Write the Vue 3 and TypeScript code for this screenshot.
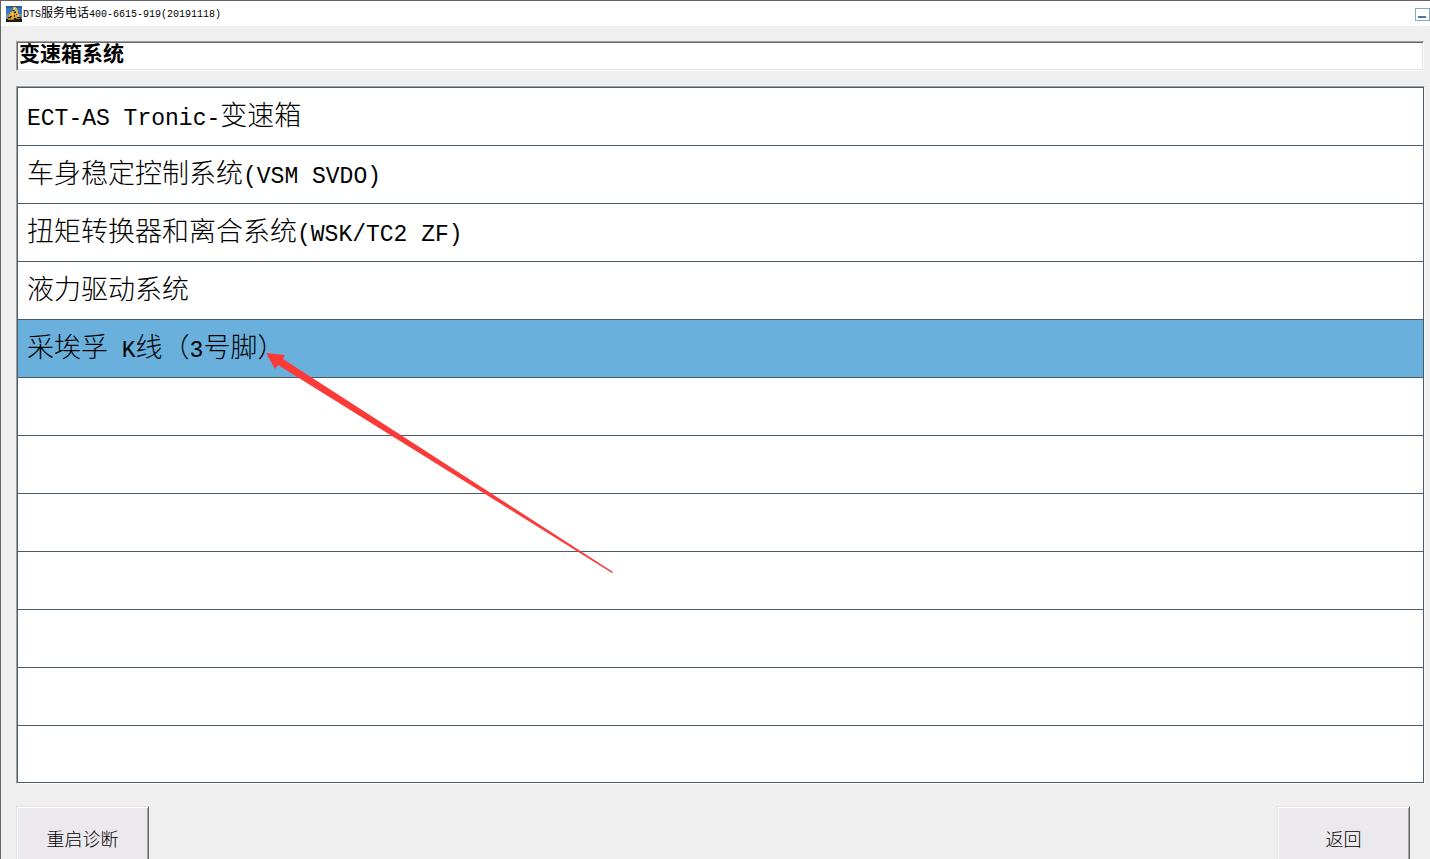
<script setup lang="ts">
import { ref } from 'vue'

interface Run {
  text: string
  latin: boolean
}

const title = 'DTS服务电话400-6615-919(20191118)'
const heading = '变速箱系统'
const rowCount = 12
const systems: string[] = [
  'ECT-AS Tronic-变速箱',
  '车身稳定控制系统(VSM SVDO)',
  '扭矩转换器和离合系统(WSK/TC2 ZF)',
  '液力驱动系统',
  '采埃孚 K线（3号脚）',
]
const rows: string[] = Array.from({ length: rowCount }, (_, i) => systems[i] ?? '')
const selected = ref(4)

// Latin runs are set in a narrower monospaced face than the Chinese text.
function runs(text: string): Run[] {
  return (text.match(/[\x20-\x7e]+|[^\x20-\x7e]+/g) ?? []).map((part) => ({
    text: part,
    latin: /^[\x20-\x7e]/.test(part),
  }))
}
</script>

<template>
  <div class="window">
    <header class="titlebar">
      <svg class="app-icon" viewBox="0 0 16 16" shape-rendering="crispEdges" aria-hidden="true">
        <rect width="16" height="16" fill="#3a78c0" />
        <rect width="16" height="2" fill="#285ca5" />
        <path d="M0 8h3v4H0zM13 8h3v5h-3z" fill="#6591ba" />
        <path d="M0 13h2v-2h2V9h1V6h2V3h1v3h3v2h2v3h2v2h1v3H0z" fill="#17191c" />
        <path d="M7 1h3v1h1v2h1v4h1v3h-2V8h-1V5H9V4H7z" fill="#f4b82c" />
        <path d="M3 8h1V6h2V5h2v2h2v2h1v3H8v1H5v-2H3z" fill="#e8a522" />
        <path d="M1 12h4v1h3v1H2v-1H1zM10 12h4v1h-4z" fill="#c17d1b" />
        <path d="M6 7h1v2H6zM8 2h1v1H8z" fill="#fff0a0" />
        <path d="M4 10h2v1H4zM8 9h1v2H8z" fill="#33220f" />
      </svg>
      <span class="title"><span v-for="(r, i) in runs(title)" :key="i" :class="{ latin: r.latin }">{{ r.text }}</span></span>
      <button class="minimize" type="button" aria-label="最小化"></button>
    </header>

    <main class="body">
      <h1 class="heading">{{ heading }}</h1>

      <div class="panel">
        <ul class="list">
          <li v-for="(row, i) in rows" :key="i" class="row" :class="{ selected: i === selected }">
            <button v-if="row" class="item" type="button" :aria-pressed="i === selected" @click="selected = i">
              <span v-for="(r, j) in runs(row)" :key="j" :class="{ latin: r.latin }">{{ r.text }}</span>
            </button>
          </li>
        </ul>
        <svg class="arrow" viewBox="0 0 348 221" aria-hidden="true">
          <path d="M0 0 19 2 17 6 347 219 346 220 12 12 9 16Z" fill="#fc3a38" />
        </svg>
      </div>

      <footer class="actions">
        <button class="action" type="button">重启诊断</button>
        <button class="action" type="button">返回</button>
      </footer>
    </main>
  </div>
</template>

<style>
body {
  margin: 0;
  background: #efefef;
}
</style>

<style scoped>
.window {
  box-sizing: border-box;
  height: 100vh;
  overflow: hidden;
  border-top: 1px solid #646464;
  border-left: 1px solid #646464;
  background: #efefef;
  color: #000;
  font-family: "Noto Sans CJK SC", sans-serif;
  font-weight: 300;
}
.titlebar {
  display: flex;
  align-items: center;
  height: 25px;
  padding-left: 5px;
  background: #fff;
}
.app-icon {
  width: 16px;
  height: 16px;
  margin-right: 1px;
}
.title {
  flex: 1;
  font-size: 12px;
  line-height: 24px;
  font-weight: 400;
  white-space: pre;
}
.latin {
  font-family: "Liberation Mono", monospace;
  font-weight: 400;
}
.title .latin {
  font-size: 10px;
}
.minimize {
  box-sizing: border-box;
  width: 15px;
  height: 13px;
  margin-top: 2px;
  padding: 7px 3px 2px 2px;
  border: 1px solid #86a9bf;
  background: #fff;
}
.minimize::before {
  content: "";
  display: block;
  height: 2px;
  background: #5274a8;
}
.body {
  padding: 15px 5px 0 15px;
}
.heading {
  height: 26px;
  margin: 0 1px 15px 0;
  padding: 0 0 2px 2px;
  border: 1px solid;
  border-color: #a0a0a0 #fff #fff #a0a0a0;
  background: #fff;
  box-shadow: inset 1px 1px #696969, inset -1px -1px #e3e3e3;
  font-size: 21px;
  line-height: 20px;
  font-weight: 700;
}
.panel {
  position: relative;
  border: 1px solid;
  border-color: #a0a0a0 #f8f8f8 #fff #a0a0a0;
}
.list {
  margin: 0;
  padding: 0;
  list-style: none;
  border: 1px solid #4b5c68;
  background: #fff;
}
.row {
  height: 57px;
}
.row + .row {
  border-top: 1px solid #4b5c68;
}
.row:last-child {
  height: 56px;
}
.selected {
  background: #6ab0dd;
}
.item {
  display: block;
  width: 100%;
  height: 100%;
  padding: 0 0 5px 9px;
  border: 0;
  background: none;
  color: inherit;
  font: inherit;
  font-size: 27px;
  line-height: 52px;
  text-align: left;
  white-space: pre;
}
.item .latin {
  font-size: 23px;
}
.arrow {
  position: absolute;
  top: 266px;
  left: 249px;
  width: 348px;
  height: 221px;
  pointer-events: none;
}
.actions {
  display: flex;
  justify-content: space-between;
  padding: 22px 15px 0 0;
}
.action {
  width: 133px;
  height: 67px;
  padding: 0 0 4px;
  border: 1px solid;
  border-color: #e3e3e3 #696969 #696969 #e3e3e3;
  background: #ebe9ed;
  box-shadow: inset 1px 1px #fff, inset -1px -1px #a0a0a0;
  color: #000;
  font: inherit;
  font-size: 18px;
}
</style>
